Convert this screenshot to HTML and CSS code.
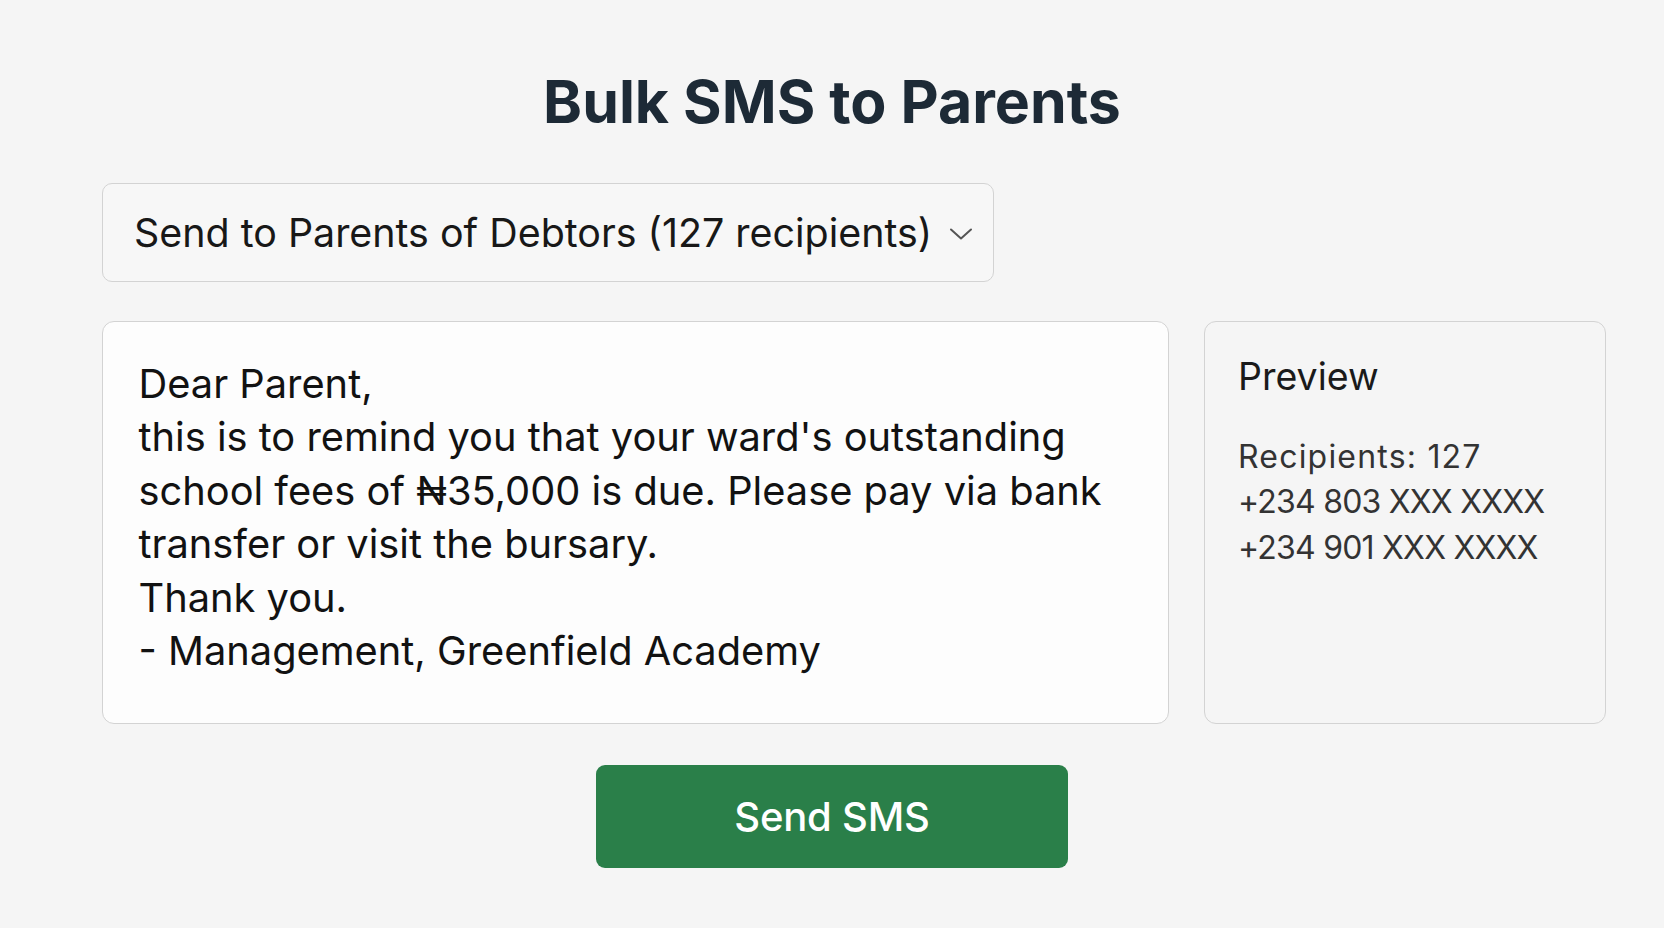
FILE: index.html
```html
<!DOCTYPE html>
<html lang="en">
<head>
<meta charset="utf-8">
<title>Bulk SMS to Parents</title>
<link rel="stylesheet" href="styles.css">
</head>
<body>
<main class="page">
  <h1 class="title">Bulk SMS to Parents</h1>
  <div class="content">
    <div class="select">
      <span class="select-label">Send to Parents of Debtors (127 recipients)</span>
      <svg class="chevron" width="24" height="12" viewBox="0 0 24 12" aria-hidden="true">
        <path d="M2 1.5 L12 10.5 L22 1.5" fill="none" stroke="#555" stroke-width="2" stroke-linecap="round" stroke-linejoin="round"/>
      </svg>
    </div>
    <div class="panels">
      <div class="message">Dear Parent,<br>this is to remind you that your ward's outstanding<br>school fees of ₦35,000 is due. Please pay via bank<br>transfer or visit the bursary.<br>Thank you.<br>- Management, Greenfield Academy</div>
      <aside class="preview">
        <div class="preview-title">Preview</div>
        <div class="preview-lines">
          <div class="count">Recipients: 127</div>
          <div class="phone">+234 803 XXX XXXX</div>
          <div class="phone">+234 901 XXX XXXX</div>
        </div>
      </aside>
    </div>
  </div>
  <div class="actions">
    <button class="send-btn" type="button">Send SMS</button>
  </div>
</main>
</body>
</html>
```

FILE: styles.css
```css
* { box-sizing: border-box; }

html, body {
  margin: 0;
  padding: 0;
  background: #f5f5f5;
  font-family: Inter, "Noto Sans", "Liberation Sans", sans-serif;
  color: #161616;
}

.page {
  width: 1664px;
  height: 928px;
  padding-top: 67px;
}

.title {
  margin: 0;
  text-align: center;
  font-size: 59px;
  line-height: 70px;
  font-weight: 700;
  color: #1d2a36;
}

.content {
  padding-left: 102px;
  margin-top: 46px;
}

.select {
  width: 892px;
  height: 99px;
  border: 1.5px solid #d3d3d3;
  border-radius: 10px;
  background: #f7f7f7;
  display: flex;
  align-items: center;
  justify-content: space-between;
  padding: 0 20px 0 31px;
}

.select-label {
  font-size: 39.4px;
  color: #181818;
}

.chevron {
  display: block;
  margin-top: 2px;
}

.panels {
  display: flex;
  gap: 35px;
  margin-top: 39px;
}

.message {
  width: 1067px;
  height: 403px;
  background: #fdfdfd;
  border: 1.5px solid #d3d3d3;
  border-radius: 12px;
  padding: 34.5px 20px 0 35.5px;
  font-size: 39.8px;
  line-height: 53.6px;
  color: #121212;
}

.preview {
  width: 402px;
  height: 403px;
  background: #f5f5f5;
  border: 1.5px solid #d3d3d3;
  border-radius: 12px;
  padding: 30px 20px 0 33px;
}

.preview-title {
  font-size: 37.5px;
  line-height: 50px;
  color: #1a1a1a;
}

.preview-lines {
  margin-top: 31.5px;
  font-size: 32px;
  line-height: 45.5px;
  color: #333;
}

.count {
  letter-spacing: 1.2px;
}

.phone {
  letter-spacing: -0.78px;
}

.actions {
  display: flex;
  justify-content: center;
  margin-top: 41px;
}

.send-btn {
  width: 472px;
  height: 103px;
  border: none;
  border-radius: 9px;
  background: #2a7f49;
  color: #ffffff;
  font-family: Inter, "Noto Sans", "Liberation Sans", sans-serif;
  font-size: 40px;
  font-weight: 500;
  letter-spacing: -0.2px;
  cursor: pointer;
}
```
